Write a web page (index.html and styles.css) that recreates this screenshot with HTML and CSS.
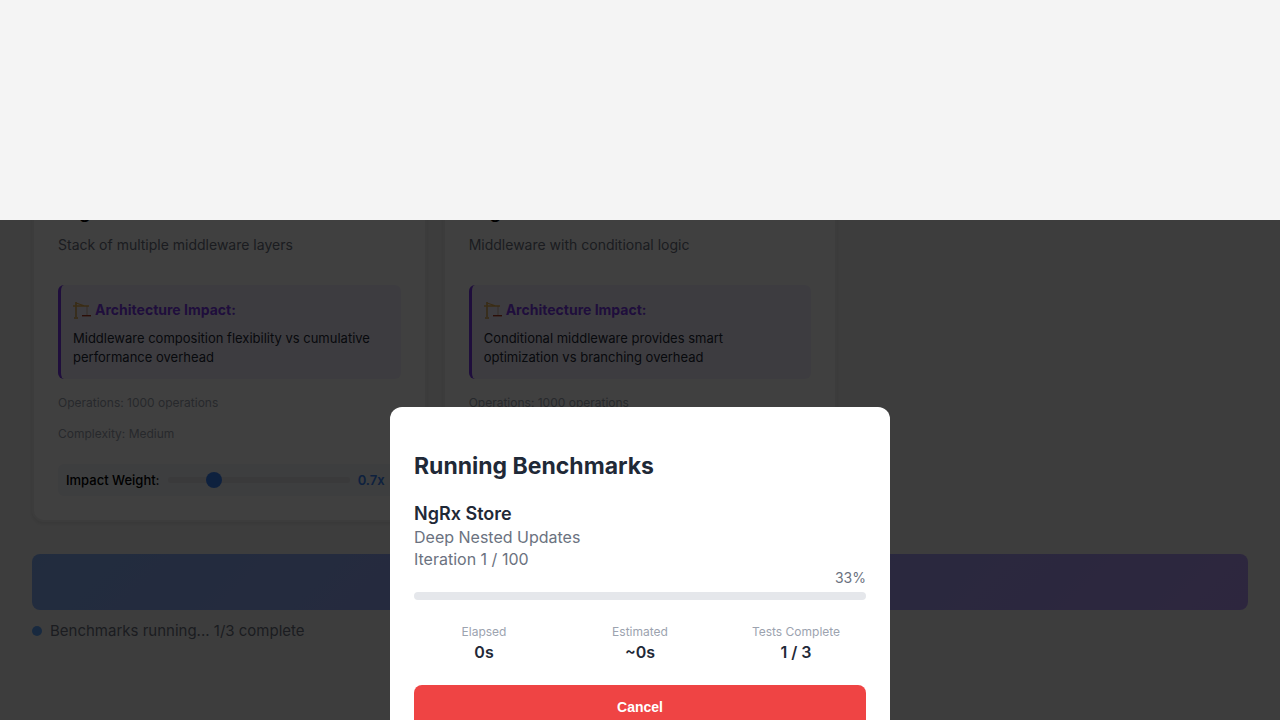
FILE: index.html
```html
<!DOCTYPE html>
<html lang="en">
<head>
<meta charset="utf-8">
<meta name="viewport" content="width=device-width, initial-scale=1">
<title>Running Benchmarks</title>
<link rel="stylesheet" href="styles.css">
</head>
<body>
<div class="backdrop-gap"></div>
<div class="stage">
  <main class="content">
    <div class="cards">
      <article class="card">
        <h3 class="card-title">Logic</h3>
        <p class="card-text">Stack of multiple middleware layers</p>
        <section class="impact">
          <h4 class="impact-title"><svg class="crane" viewBox="0 0 18 18" aria-hidden="true"><path d="M3 1v16M1 17h4" stroke="#e0b878" stroke-width="2" fill="none"/><path d="M0 5h16M3 2l9 3" stroke="#e8b050" stroke-width="1.3" fill="none"/><path d="M14 5v9" stroke="#c8a070" stroke-width="0.7" fill="none"/><path d="M9 14h9v1.4H9z" fill="#b03a20"/></svg>Architecture Impact:</h4>
          <p class="impact-text">Middleware composition flexibility vs cumulative performance overhead</p>
        </section>
        <p class="meta">Operations: 1000 operations</p>
        <p class="meta">Complexity: Medium</p>
        <div class="weight">
          <label for="weight-a">Impact Weight:</label>
          <input class="slider" id="weight-a" type="range" min="0" max="3" step="0.1" value="0.7">
          <output class="weight-value" for="weight-a">0.7x</output>
        </div>
      </article>
      <article class="card">
        <h3 class="card-title">Logic</h3>
        <p class="card-text">Middleware with conditional logic</p>
        <section class="impact">
          <h4 class="impact-title"><svg class="crane" viewBox="0 0 18 18" aria-hidden="true"><path d="M3 1v16M1 17h4" stroke="#e0b878" stroke-width="2" fill="none"/><path d="M0 5h16M3 2l9 3" stroke="#e8b050" stroke-width="1.3" fill="none"/><path d="M14 5v9" stroke="#c8a070" stroke-width="0.7" fill="none"/><path d="M9 14h9v1.4H9z" fill="#b03a20"/></svg>Architecture Impact:</h4>
          <p class="impact-text">Conditional middleware provides smart optimization vs branching overhead</p>
        </section>
        <p class="meta">Operations: 1000 operations</p>
      </article>
    </div>
    <button class="run" type="button" aria-label="Run benchmarks" disabled></button>
    <p class="status"><span class="dot"></span>Benchmarks running... 1/3 complete</p>
  </main>
  <div class="overlay">
    <div class="modal" role="dialog" aria-modal="true" aria-labelledby="modal-title">
      <h2 class="modal-title" id="modal-title">Running Benchmarks</h2>
      <p class="library">NgRx Store</p>
      <p class="detail">Deep Nested Updates</p>
      <p class="detail">Iteration 1 / 100</p>
      <p class="percent">33%</p>
      <div class="track" role="progressbar" aria-label="Progress"></div>
      <dl class="stats">
        <div class="stat"><dt>Elapsed</dt><dd>0s</dd></div>
        <div class="stat"><dt>Estimated</dt><dd>~0s</dd></div>
        <div class="stat"><dt>Tests Complete</dt><dd>1 / 3</dd></div>
      </dl>
      <button class="cancel" type="button">Cancel</button>
    </div>
  </div>
</div>
</body>
</html>
```
FILE: styles.css
```css
* { box-sizing: border-box; }
body {
  margin: 0;
  height: 100vh;
  display: flex;
  flex-direction: column;
  overflow: hidden;
  background: #f4f4f4;
  color: #1f2937;
  font-family: Inter, "Liberation Sans", sans-serif;
}
h2, h3, h4, p, dl, dd { margin: 0; }
.backdrop-gap { flex: 0 0 220px; }
.stage {
  position: relative;
  flex: 1;
  overflow: hidden;
}
.content { padding: 0 32px; }
.cards {
  display: grid;
  grid-template-columns: repeat(3, 1fr);
  gap: 16px;
  margin-top: -46px;
}
.card {
  padding: 24px;
  border: 2px solid #f0f0f0;
  border-radius: 12px;
  background: #fff;
  box-shadow: 0 2px 4px rgba(0, 0, 0, 0.1);
}
.card-title { font-size: 18px; line-height: 24px; font-weight: 600; color: #000; }
.card-text {
  margin: 9px 0 28px;
  font-size: 14px;
  line-height: 24px;
  color: #6b7280;
}
.impact {
  margin-bottom: 12px;
  padding: 13px 12px 12px;
  border-left: 3px solid #7c3aed;
  border-radius: 6px;
  background: #f3f0ff;
}
.impact-title {
  display: flex;
  align-items: center;
  gap: 4px;
  margin-bottom: 7px;
  font-size: 14px;
  line-height: 24px;
  font-weight: 700;
  color: #7c3aed;
}
.crane { width: 18px; height: 18px; }
.impact-text { font-size: 13px; line-height: 19px; }
.meta {
  margin-bottom: 7px;
  font-size: 12px;
  line-height: 24px;
  color: #9ca3af;
}
.weight {
  display: flex;
  align-items: center;
  gap: 8px;
  margin-top: 18px;
  padding: 8px;
  border-radius: 6px;
  background: #f1f5f9;
  color: #000;
  font-size: 13px;
  line-height: 16px;
  font-weight: 500;
}
.slider {
  flex: 1;
  min-width: 0;
  height: 6px;
  margin: 0;
  appearance: none;
  border-radius: 3px;
  background: #e5e7eb;
}
.slider::-webkit-slider-thumb {
  appearance: none;
  width: 16px;
  height: 16px;
  border-radius: 50%;
  background: #3b82f6;
}
.weight-value { min-width: 35px; color: #3b82f6; font-weight: 600; }
.run {
  display: block;
  width: 100%;
  height: 56px;
  margin-top: 32px;
  border: 0;
  border-radius: 8px;
  background: linear-gradient(135deg, #3b82f6, #8b5cf6);
  opacity: 0.6;
}
.status {
  display: flex;
  align-items: center;
  gap: 8px;
  margin-top: 9px;
  font-size: 15px;
  line-height: 24px;
  color: #6b7280;
}
.dot {
  width: 10px;
  height: 10px;
  border-radius: 50%;
  background: #60a5fa;
}
.overlay {
  position: absolute;
  top: 0;
  left: 0;
  right: 0;
  height: 100vh;
  display: flex;
  align-items: center;
  justify-content: center;
  background: rgba(0, 0, 0, 0.75);
}
.modal {
  width: 90%;
  max-width: 500px;
  padding: 41px 24px 24px;
  border-radius: 12px;
  background: #fff;
}
.modal-title {
  margin-bottom: 19px;
  font-size: 23px;
  line-height: 36px;
  font-weight: 700;
}
.library { margin-bottom: 1px; font-size: 18px; line-height: 22px; font-weight: 600; }
.detail { font-size: 16px; line-height: 22px; color: #6b7280; }
.percent {
  text-align: right;
  font-size: 14px;
  line-height: 16px;
  color: #6b7280;
}
.track {
  height: 8px;
  margin: 6px 0 24px;
  border-radius: 4px;
  background: #e5e7eb;
}
.stats {
  display: grid;
  grid-template-columns: repeat(3, 1fr);
  gap: 16px;
  margin-bottom: 23px;
  text-align: center;
}
.stat dt { margin-bottom: 2px; font-size: 12px; line-height: 16px; color: #9ca3af; }
.stat dd { font-size: 16px; line-height: 20px; font-weight: 600; }
.cancel {
  display: block;
  width: 100%;
  height: 44px;
  border: 0;
  border-radius: 8px;
  background: #ef4444;
  color: #fff;
  font: 600 14px/20px "Liberation Sans", sans-serif;
}
```
